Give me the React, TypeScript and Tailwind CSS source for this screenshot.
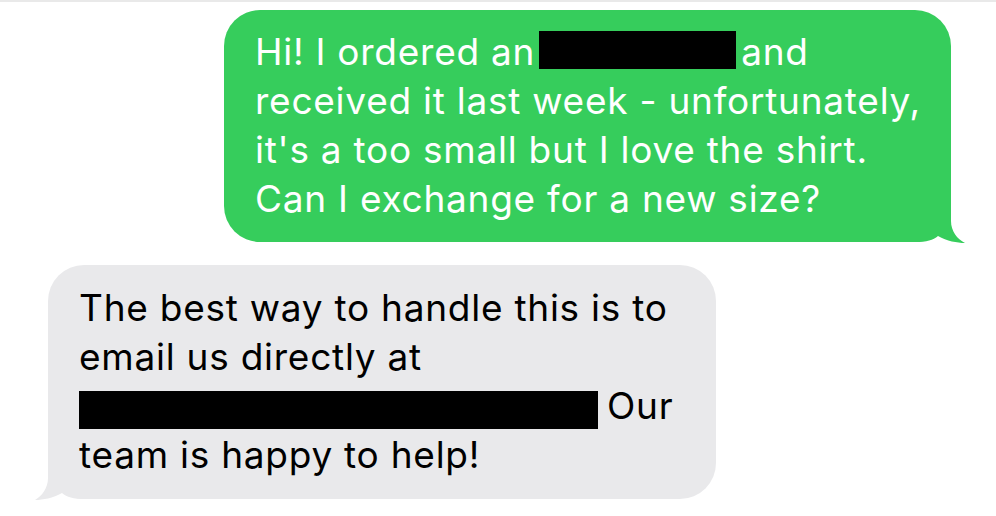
export default function App() {
  return (
    <div className="w-[996px] h-[516px] bg-white border-t-2 border-[#e9e9e9] flex flex-col pt-2 font-['Inter',sans-serif] text-[37px] leading-[49px] tracking-[0.75px]">
      <div className="relative self-end mr-[45px] w-[727px] rounded-[36px] bg-[#36cd5c] text-white pl-[31px] pr-4 pt-[17px] pb-[19px] whitespace-nowrap">
        <svg className="absolute right-[-14px] bottom-[-1px]" width="60" height="48" viewBox="0 0 60 48">
          <path d="M46 0 L46 26 C46 36 52 44 60 48 C52 48 42 46 33 41 C28 45 22 47 10 47 L0 47 L0 0 Z" fill="#36cd5c" />
        </svg>
        <div className="relative">
          <p>
            Hi! I ordered an
            <span className="inline-block w-[197px] h-[38px] ml-[4px] mr-[5px] bg-black align-[-4px]" />
            and
          </p>
          <p>received it last week - unfortunately,</p>
          <p>it's a too small but I love the shirt.</p>
          <p>Can I exchange for a new size?</p>
        </div>
      </div>

      <div className="relative ml-[48px] mt-[23px] w-[668px] rounded-[36px] bg-[#e9e9eb] text-black pl-[31px] pr-4 pt-[18px] pb-[20px] whitespace-nowrap">
        <svg className="absolute left-[-13px] bottom-[-1px]" width="60" height="48" viewBox="0 0 60 48">
          <path d="M13 0 L13 26 C13 36 7 44 0 48 C8 48 18 46 27 41 C32 45 38 47 50 47 L60 47 L60 0 Z" fill="#e9e9eb" />
        </svg>
        <div className="relative">
          <p>The best way to handle this is to</p>
          <p>email us directly at</p>
          <p>
            <span className="inline-block w-[519px] h-[38px] mr-[9px] bg-black align-[-10px]" />
            Our
          </p>
          <p>team is happy to help!</p>
        </div>
      </div>
    </div>
  );
}
